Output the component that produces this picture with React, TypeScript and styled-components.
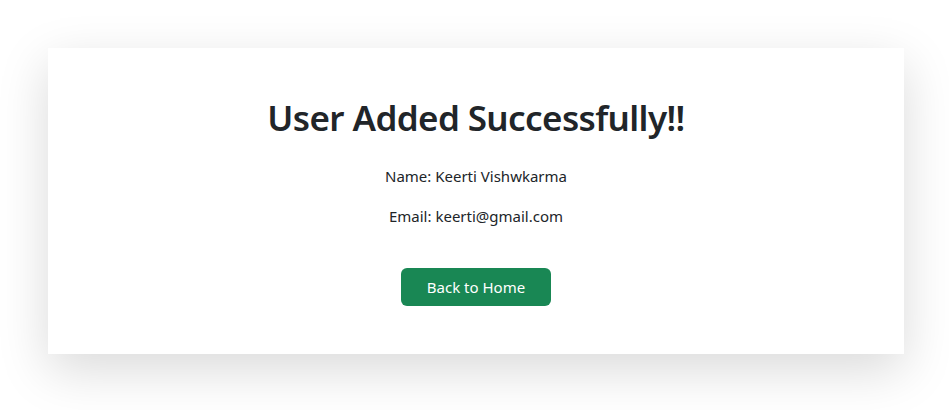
import React from "react";
import styled, { createGlobalStyle } from "styled-components";

const Global = createGlobalStyle`
  html, body { margin: 0; padding: 0; background: #fff; }
  body { font-family: "Noto Sans", "Open Sans", sans-serif; color: #212529; font-size: 16px; line-height: 1.5; }
`;

const Page = styled.div`
  box-sizing: border-box;
  min-height: 410px;
  padding: 48px 45px 57px 48px;
`;

const Card = styled.div`
  background: #fff;
  box-shadow: 0 16px 48px rgba(0, 0, 0, 0.15);
  padding: 48px;
  text-align: center;
`;

const Title = styled.h1`
  margin: 0 0 25px;
  padding-top: 1px;
  font-size: 35px;
  font-weight: 600;
  line-height: 42px;
  letter-spacing: -0.6px;
`;

const Line = styled.p`
  margin: 0 0 16px;
  font-size: 15px;
  line-height: 24px;
`;

const Button = styled.button`
  margin-top: 24px;
  height: 38px;
  padding: 0 26px;
  border: none;
  border-radius: 6px;
  background: #198754;
  color: #fff;
  font-family: inherit;
  font-size: 15px;
  cursor: pointer;
`;

export default function App() {
  return (
    <>
      <Global />
      <Page>
        <Card>
          <Title>User Added Successfully!!</Title>
          <Line>Name: Keerti Vishwkarma</Line>
          <Line>Email: keerti@gmail.com</Line>
          <Button>Back to Home</Button>
        </Card>
      </Page>
    </>
  );
}
